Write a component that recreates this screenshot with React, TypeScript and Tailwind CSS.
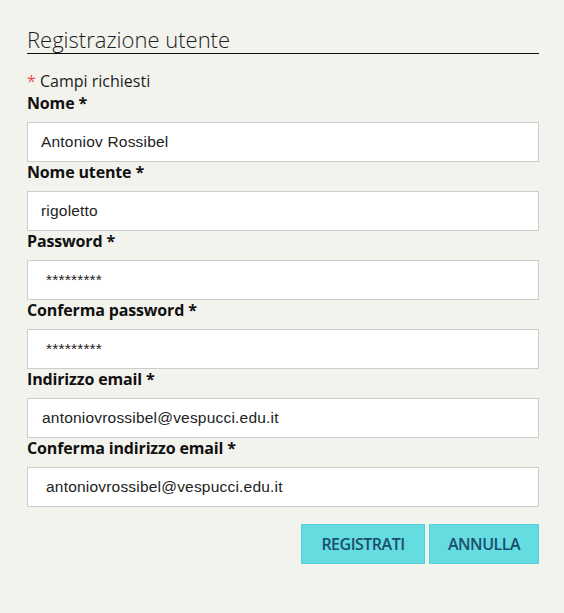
const fields = [
  { label: 'Nome *', value: 'Antoniov Rossibel', pad: 'pl-[13px]' },
  { label: 'Nome utente *', value: 'rigoletto', pad: 'pl-[13px]' },
  { label: 'Password *', value: '*********', pad: 'pl-[18px]' },
  { label: 'Conferma password *', value: '*********', pad: 'pl-[18px]' },
  { label: 'Indirizzo email *', value: 'antoniovrossibel@vespucci.edu.it', pad: 'pl-[14px]' },
  { label: 'Conferma indirizzo email *', value: 'antoniovrossibel@vespucci.edu.it', pad: 'pl-[18px]' },
];

export default function App() {
  return (
    <div className="min-h-[613px] w-full bg-[#f3f3ee] pl-[27px] pr-[25px] pt-[27px] font-['Open_Sans',sans-serif]">
      <h1 className="border-b-[1.5px] border-[#111] pb-[1px] text-[22px] font-light leading-[25px] text-[#1c1c1c]">
        Registrazione utente
      </h1>

      <p className="mt-[17px] text-[16px] leading-[20px] text-[#1c1c1c]">
        <span className="text-[#e84c4c]">*</span> Campi richiesti
      </p>

      <form className="mt-[2px]">
        {fields.map((f) => (
          <div key={f.label}>
            <label className="block text-[16px] font-bold leading-[20px] tracking-[-0.15px] text-[#111]">
              {f.label}
            </label>
            <div
              className={`mt-[9px] flex h-[40px] items-center border border-[#cccccc] bg-white ${f.pad} font-['Liberation_Sans',Arial,sans-serif] text-[15.5px] tracking-[0.2px] text-[#222]`}
            >
              {f.value}
            </div>
          </div>
        ))}

        <div className="mt-[17px] flex justify-end gap-[4px]">
          <button
            type="button"
            className="h-[40px] w-[124px] border border-[#4fd0d6] bg-[#64dce0] text-[16px] font-semibold tracking-[-0.5px] text-[#1a4e6e]"
          >
            REGISTRATI
          </button>
          <button
            type="button"
            className="h-[40px] w-[110px] border border-[#4fd0d6] bg-[#64dce0] text-[16px] font-semibold tracking-[-0.5px] text-[#1a4e6e]"
          >
            ANNULLA
          </button>
        </div>
      </form>
    </div>
  );
}
